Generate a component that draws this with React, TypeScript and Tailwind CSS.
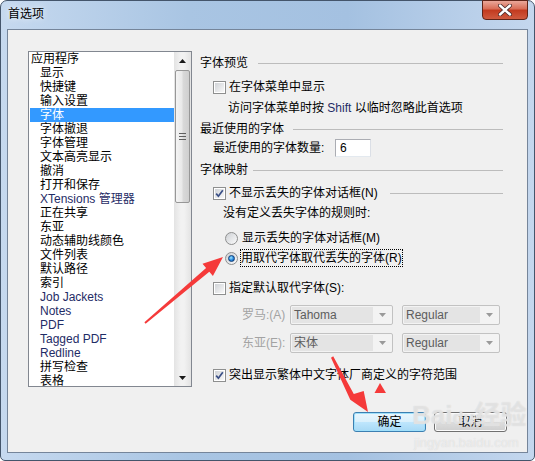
import React from 'react';

type Item = { label: string; top?: boolean; latin?: boolean; selected?: boolean };

const items: Item[] = [
  { label: '应用程序', top: true },
  { label: '显示' },
  { label: '快捷键' },
  { label: '输入设置' },
  { label: '字体', selected: true },
  { label: '字体撤退' },
  { label: '字体管理' },
  { label: '文本高亮显示' },
  { label: '撤消' },
  { label: '打开和保存' },
  { label: 'XTensions 管理器', latin: true },
  { label: '正在共享' },
  { label: '东亚' },
  { label: '动态辅助线颜色' },
  { label: '文件列表' },
  { label: '默认路径' },
  { label: '索引' },
  { label: 'Job Jackets', latin: true },
  { label: 'Notes', latin: true },
  { label: 'PDF', latin: true },
  { label: 'Tagged PDF', latin: true },
  { label: 'Redline', latin: true },
  { label: '拼写检查' },
  { label: '表格' },
];

const Check = ({ checked }: { checked?: boolean }) => (
  <span className="w-[13px] h-[13px] shrink-0 border border-[#8e8f8f] bg-white p-px flex">
    <span className="flex-1 flex items-center justify-center bg-[linear-gradient(135deg,#d0d3d7,#f8f8f8)]">
      {checked && (
        <svg width="9" height="9" viewBox="0 0 9 9">
          <path d="M1.2 4.6 L3.4 7.2 L7.8 1.2" fill="none" stroke="#3a4f86" strokeWidth="1.7" />
        </svg>
      )}
    </span>
  </span>
);

const Radio = ({ checked }: { checked?: boolean }) => (
  <span className="w-[13px] h-[13px] shrink-0 rounded-full border border-[#8e8f8f] bg-[linear-gradient(135deg,#cdd0d4,#fbfbfb)] flex items-center justify-center">
    {checked && (
      <span className="w-[7px] h-[7px] rounded-full border border-[#0f3f78] bg-[radial-gradient(circle_at_40%_35%,#9ee6ff,#2585dd_55%,#0d4a9a)]" />
    )}
  </span>
);

const Heading = ({ text, gap }: { text: string; gap: string }) => (
  <div className="h-[18px] w-[303px] flex items-center">
    <span>{text}</span>
    <div className={`${gap} flex-1 border-t border-[#bcbcbc]`} />
  </div>
);

const Select = ({ value, width }: { value: string; width: string }) => (
  <div className={`${width} h-[20px] border border-[#c2c2c2] rounded-[2px] bg-[#f3f3f3] flex p-px`}>
    <span className="flex-1 bg-[#e4e4e4] text-[#5d5d5d] pl-[2px] leading-[17px]">{value}</span>
    <span className="w-[18px] flex items-center justify-center">
      <svg width="7" height="4" viewBox="0 0 7 4">
        <path d="M0 0H7L3.5 4Z" fill="#9a9a9a" />
      </svg>
    </span>
  </div>
);

const Arrow = ({ up }: { up?: boolean }) => (
  <div className="h-[17px] flex items-center justify-center">
    <svg width="7" height="4" viewBox="0 0 7 4">
      <path d={up ? 'M3.5 0L7 4H0Z' : 'M0 0H7L3.5 4Z'} fill="#1a1a1a" />
    </svg>
  </div>
);

export default function App() {
  return (
    <div className="relative w-[535px] h-[461px] bg-white overflow-hidden font-['Liberation_Sans','Noto_Sans_CJK_SC',sans-serif] text-[12px] leading-[14px] text-black">
      <div className="w-[535px] h-[461px] flex flex-col border border-[#44556b] rounded-t-[7px] rounded-b-[5px] bg-[linear-gradient(90deg,#c6d9ef,#a9c5e3_35%,#a4c1e1_65%,#c4d7ee)]">
        {/* title bar */}
        <div className="h-[28px] flex items-start justify-between">
          <span className="ml-[7px] mt-[6px] text-[12px] leading-[14px] [text-shadow:0_0_6px_#ffffff]">首选项</span>
          <div className="mr-[6px] -mt-px w-[46px] h-[20px] rounded-b-[4px] border border-[#5f2418] bg-[linear-gradient(180deg,#eaa89a,#d86b54_45%,#c23a1f_50%,#cf5a3f)] flex items-center justify-center">
            <svg width="14" height="12" viewBox="0 0 14 12">
              <path d="M2 1.5L12 10.5M12 1.5L2 10.5" stroke="#4a2b2b" strokeWidth="4" strokeLinecap="round" />
              <path d="M2 1.5L12 10.5M12 1.5L2 10.5" stroke="#ffffff" strokeWidth="2.4" strokeLinecap="round" />
            </svg>
          </div>
        </div>

        {/* client */}
        <div className="mx-[6px] h-[424px] border border-[#75859a] bg-[#f0f0f0] pl-[20px] pt-[21px] flex items-start">
          {/* list box */}
          <div className="w-[164px] h-[336px] border border-[#828790] bg-white flex overflow-hidden">
            <div className="flex-1 pl-px overflow-hidden">
              {items.map((it) => (
                <div
                  key={it.label}
                  className={`h-[14px] whitespace-nowrap ${it.top ? 'pl-px' : 'pl-[10px]'} ${
                    it.selected ? 'bg-[#3399ff] text-white' : it.latin ? 'text-[#1f2c66]' : 'text-black'
                  }`}
                >
                  {it.label}
                </div>
              ))}
            </div>
            <div className="w-[17px] flex flex-col bg-[linear-gradient(90deg,#e3e3e3,#f2f2f2_40%,#f2f2f2_60%,#e3e3e3)]">
              <Arrow up />
              <div className="mx-px mt-px h-[133px] rounded-[2px] border border-[#979797] bg-[linear-gradient(90deg,#f4f4f4,#e9e9e9_45%,#d9d9d9_55%,#cfcfcf)] flex flex-col items-center justify-center gap-[2px]">
                <div className="w-[7px] h-px bg-[#5f5f5f]" />
                <div className="w-[7px] h-px bg-[#5f5f5f]" />
                <div className="w-[7px] h-px bg-[#5f5f5f]" />
              </div>
              <div className="flex-1" />
              <Arrow />
            </div>
          </div>

          {/* right panel */}
          <div className="ml-[8px] pt-[3px] w-[307px] flex flex-col">
            <Heading text="字体预览" gap="ml-[10px]" />
            <div className="mt-[6px] h-[18px] pl-[13px] flex items-center gap-[3px]">
              <Check />
              <span>在字体菜单中显示</span>
            </div>
            <div className="mt-[3px] h-[18px] pl-[28px] flex items-center">
              访问字体菜单时按&nbsp;<span className="text-[#1f2c66]">Shift</span>&nbsp;以临时忽略此首选项
            </div>
            <div className="mt-[3px]">
              <Heading text="最近使用的字体" gap="ml-[9px]" />
            </div>
            <div className="mt-px h-[18px] pl-[13px] flex items-center">
              <span className="w-[122px]">最近使用的字体数量:</span>
              <div className="w-[36px] h-[18px] border border-[#abadb3] border-b-[#e3e9ef] border-r-[#dbdfe6] bg-white pl-[4px] leading-[16px]">
                6
              </div>
            </div>
            <div className="mt-[4px]">
              <Heading text="字体映射" gap="ml-[5px]" />
            </div>
            <div className="mt-[5px] h-[18px] w-[303px] pl-[13px] flex items-center">
              <Check checked />
              <span className="ml-[3px]">不显示丢失的字体对话框(N)</span>
              <div className="ml-[12px] flex-1 border-t border-[#bcbcbc]" />
            </div>
            <div className="mt-[2px] h-[18px] pl-[23px] flex items-center">没有定义丢失字体的规则时:</div>
            <div className="mt-[7px] h-[18px] pl-[25px] flex items-center gap-[4px]">
              <Radio />
              <span>显示丢失的字体对话框(M)</span>
            </div>
            <div className="mt-[2px] h-[18px] pl-[25px] flex items-center">
              <Radio checked />
              <span className="ml-[2px] h-[18px] px-px flex items-center outline outline-1 outline-dotted outline-[#000] -outline-offset-1">
                用取代字体取代丢失的字体(R)
              </span>
            </div>
            <div className="mt-[12px] h-[18px] pl-[13px] flex items-center gap-[3px]">
              <Check />
              <span>指定默认取代字体(S):</span>
            </div>
            <div className="mt-[8px] h-[20px] pl-[42px] flex items-center">
              <span className="w-[48px] text-[#a3a3a3]">罗马:(A)</span>
              <Select value="Tahoma" width="w-[103px]" />
              <div className="ml-[9px]">
                <Select value="Regular" width="w-[98px]" />
              </div>
            </div>
            <div className="mt-[8px] h-[20px] pl-[42px] flex items-center">
              <span className="w-[48px] text-[#a3a3a3]">东亚(E):</span>
              <Select value="宋体" width="w-[103px]" />
              <div className="ml-[9px]">
                <Select value="Regular" width="w-[98px]" />
              </div>
            </div>
            <div className="mt-[13px] h-[18px] pl-[13px] flex items-center gap-[3px]">
              <Check checked />
              <span>突出显示繁体中文字体厂商定义的字符范围</span>
            </div>
            <div className="mt-[28px] pl-[153px] flex gap-[8px]">
              <button className="w-[73px] h-[20px] rounded-[3px] border border-[#3c7fb1] bg-[linear-gradient(180deg,#eaf6fd,#d9f0fc_50%,#bee6fd_51%,#a7d9f5)] shadow-[inset_0_0_0_1px_#9fe0fb]">
                确定
              </button>
              <button className="w-[73px] h-[20px] rounded-[3px] border border-[#707070] bg-[linear-gradient(180deg,#f2f2f2,#ebebeb_50%,#dddddd_51%,#cfcfcf)] shadow-[inset_0_0_0_1px_#fcfcfc]">
                取消
              </button>
            </div>
          </div>
        </div>
      </div>

      {/* watermark */}
      <div className="absolute left-[412px] top-[400px] text-[26px] leading-[30px] font-bold text-white/40 [text-shadow:0_0_1px_#cfcfcf] pointer-events-none">
        Bai<span className="text-[18px]">du</span>经验
      </div>
      <div className="absolute left-[414px] top-[436px] text-[13px] leading-[14px] text-white/50 [text-shadow:0_0_1px_#cfcfcf] pointer-events-none">
        jingyan.baidu.com
      </div>

      {/* red annotation arrows */}
      <svg className="absolute inset-0 pointer-events-none" width="535" height="461" viewBox="0 0 535 461">
        <polygon points="145.6,323.8 144.4,322.2 206.1,268.0 202.5,263.8 223,257 212.9,276.0 209.3,271.8" fill="#f53a3a" />
        <polygon points="333.2,356.3 331.0,357.7 349.0,397.0 350.3,399.7 368,412 363.7,390.9 353.8,394.0" fill="#f53a3a" />
        <polygon points="380,383 374.5,393 386,393" fill="#f53a3a" />
      </svg>
    </div>
  );
}
